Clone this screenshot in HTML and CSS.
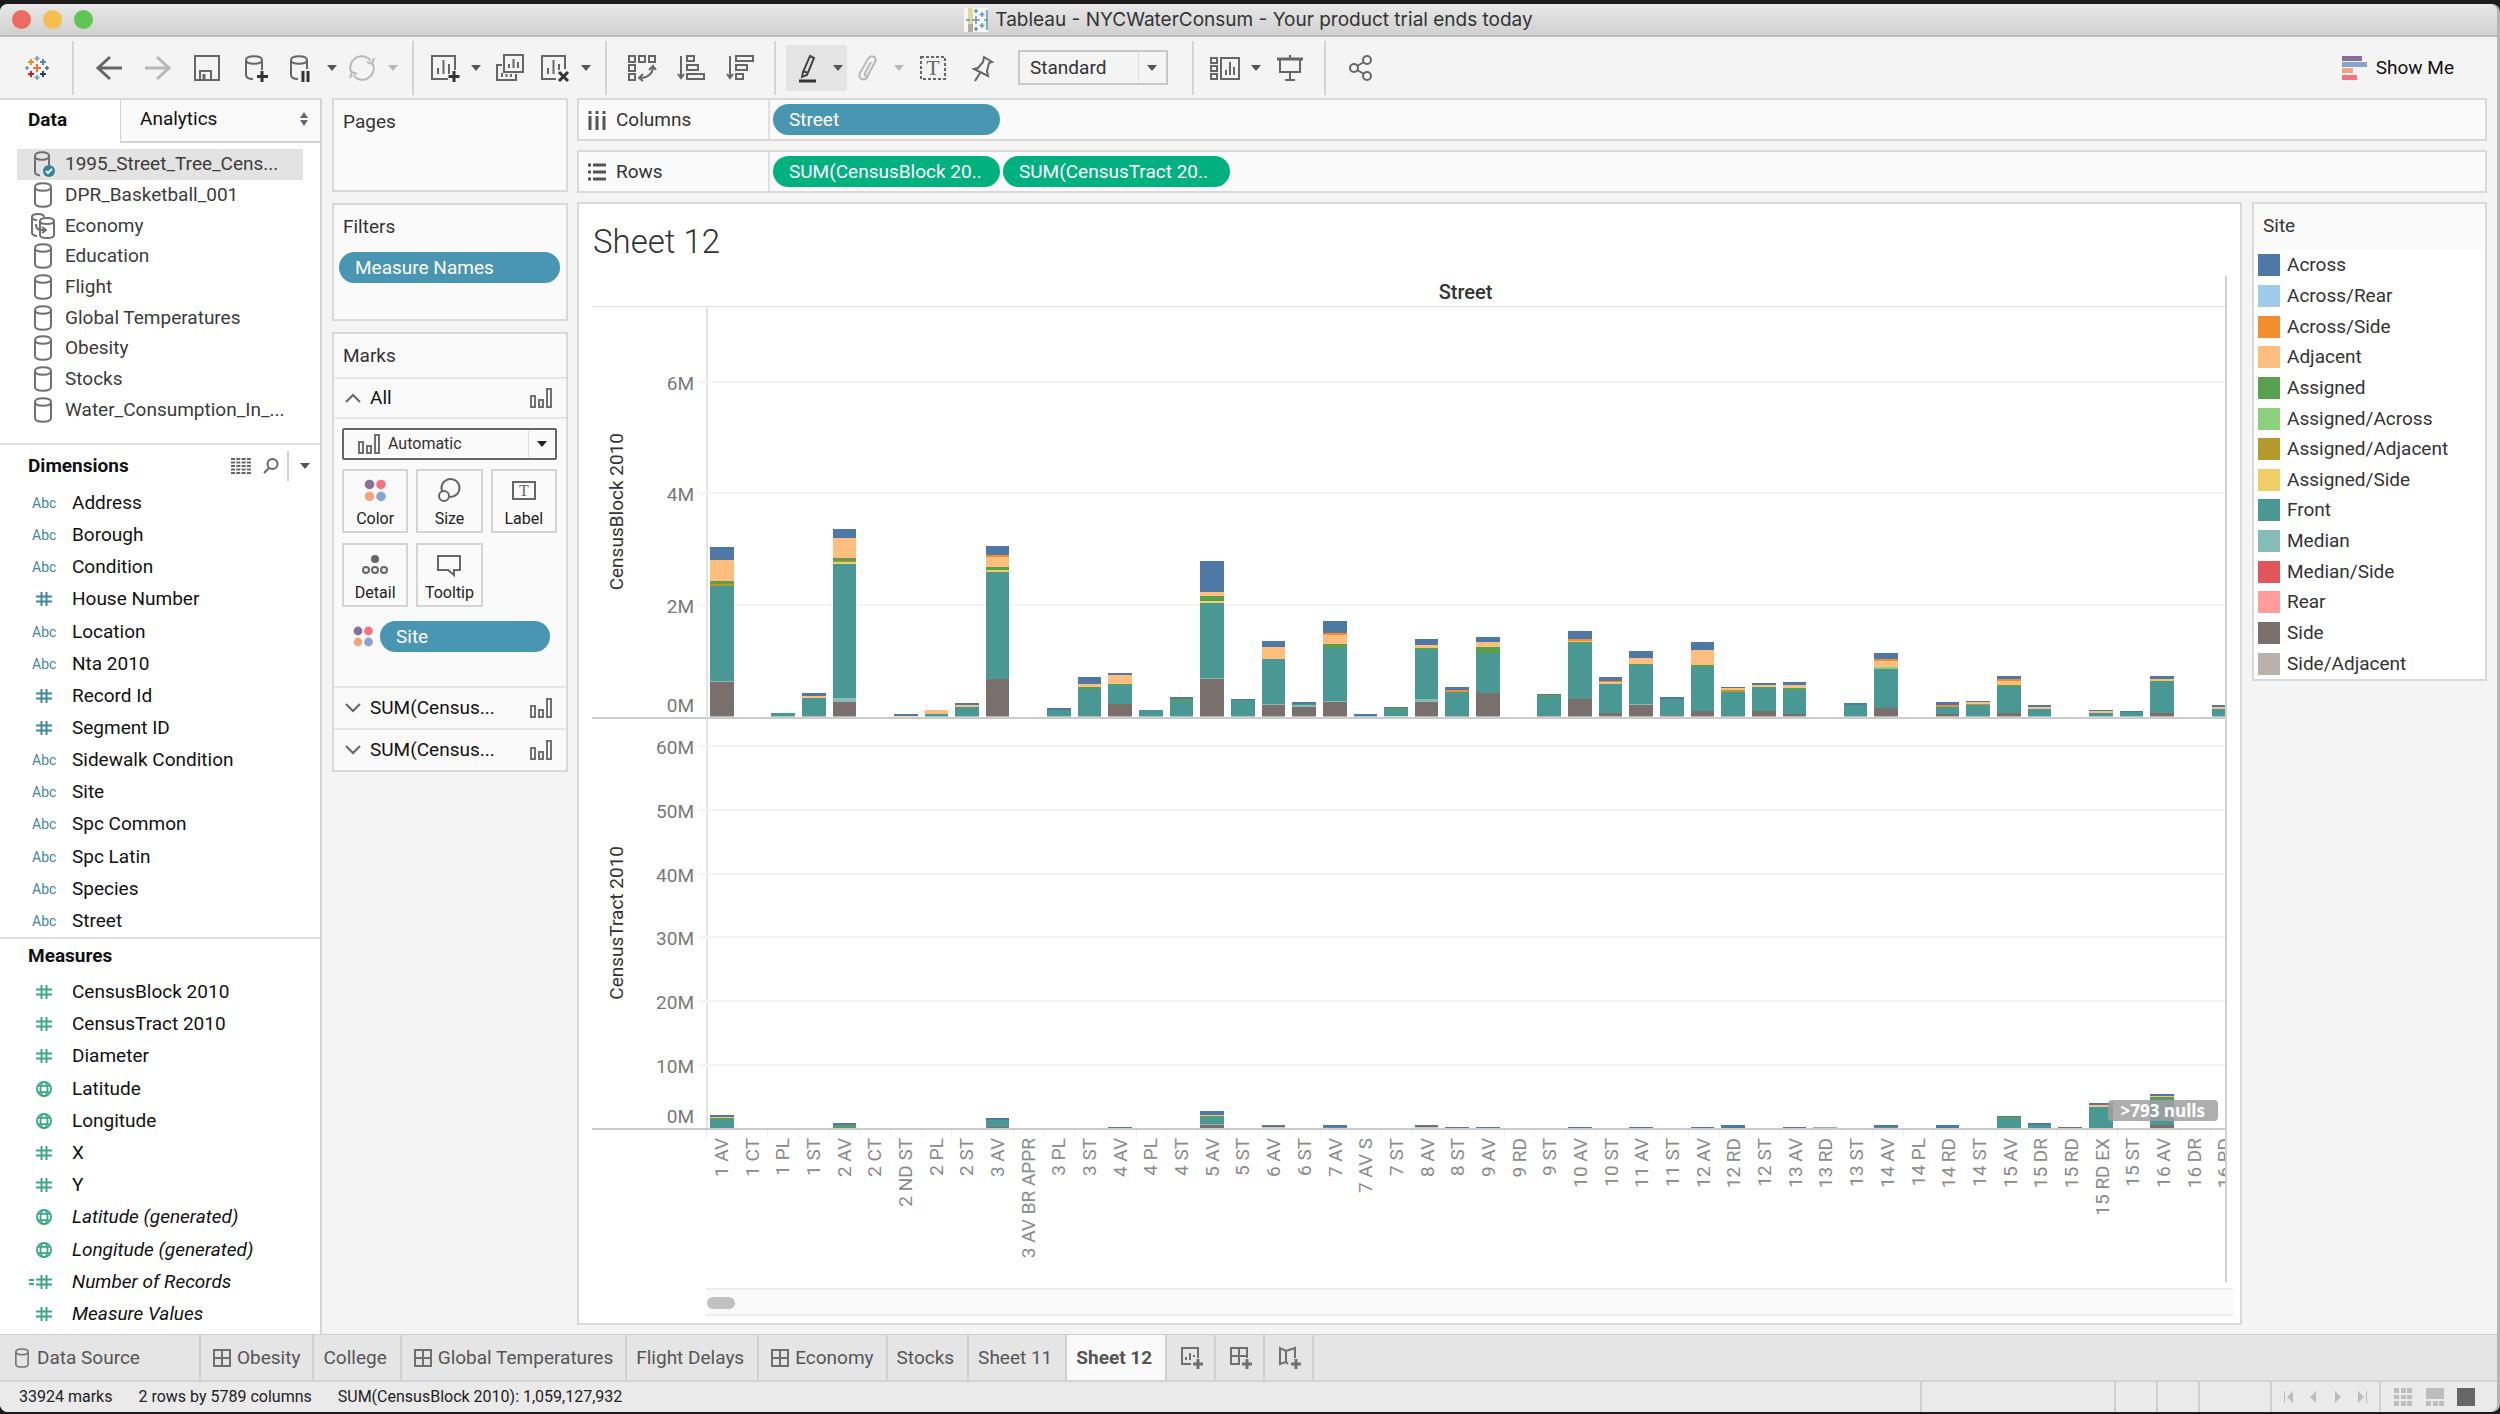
FILE: index.html
```html
<!DOCTYPE html>
<html lang="en">
<head>
    <meta charset="UTF-8">
    <meta name="viewport" content="width=device-width, initial-scale=1.0">
    <title>Tableau - NYCWaterConsum</title>
    <link rel="stylesheet" href="styles.css">
</head>
<body>
    <!-- Shared icons -->
    <svg class="sprite" aria-hidden="true">
        <symbol id="i-db" viewBox="0 0 18 26">
            <path d="M1 5v16c0 5 16 5 16 0V5M1 5c0-5 16-5 16 0s-16 5-16 0z"/>
        </symbol>
        <symbol id="i-hash" viewBox="0 0 16 16">
            <path d="M5.500 1v14M10.500 1v14M0 5.500h16M0 10.500h16"/>
        </symbol>
        <symbol id="i-globe" viewBox="0 0 18 18">
            <circle cx="9" cy="9" r="8"/><ellipse cx="9" cy="9" rx="4" ry="8"/><path d="M2 5.500h14M2 12.500h14"/>
        </symbol>
        <symbol id="i-bars" viewBox="0 0 22 22">
            <path d="M1 9h4v11H1zM9 13h4v7H9zM17 2h4v18h-4z"/>
        </symbol>
        <symbol id="i-dots" viewBox="0 0 20 22">
            <circle cx="5" cy="5" r="4.400" fill="#86709a"/><circle cx="15.500" cy="5" r="4.400" fill="#f9707e"/>
            <circle cx="5" cy="16" r="4.400" fill="#f3a67b"/><circle cx="15.500" cy="16" r="4.400" fill="#83a5cf"/>
        </symbol>
        <symbol id="i-dash" viewBox="0 0 18 18">
            <path d="M1 1h16v16H1zM9 1v16M1 9h16"/>
        </symbol>
        <symbol id="i-caret" viewBox="0 0 10 6">
            <path d="M0 0h10L5 6z"/>
        </symbol>
    </svg>

    <div class="window">
        <header class="titlebar">
            <div class="lights">
                <button class="light red" aria-label="Close"></button>
                <button class="light yellow" aria-label="Minimize"></button>
                <button class="light green" aria-label="Zoom"></button>
            </div>
            <div class="window-title">
                <svg width="24" height="24" viewBox="0 0 24 24">
                    <path fill="#f7f7f7" d="M0 0h24v24H0z"/>
                    <path fill="#e8d79a" d="M4 0h5v16H4z"/><path fill="#b9ad94" d="M4 16h5v8H4z"/>
                    <path fill="none" stroke="#5d96bd" stroke-width="1.500" d="M12 8v8M8 12h8M12 1v4M10 3h4M12 19v4M10 21h4M18 4v5M15.500 6.500h5M18 15v5M15.500 17.500h5M2 12h4M20 12h4M23 2v20"/>
                </svg>
                <span>Tableau - NYCWaterConsum - Your product trial ends today</span>
            </div>
        </header>

        <!-- Toolbar -->
        <nav class="toolbar">
            <button class="logo" aria-label="Tableau">
                <svg width="26" height="26" viewBox="0 0 26 26">
                    <g fill="none" stroke-width="2">
                        <path stroke="#e8762c" d="M13 9v8M9 13h8"/>
                        <path stroke="#eb9129" d="M7 4v6M4 7h6"/>
                        <path stroke="#59879b" d="M19 4v6M16 7h6"/>
                        <path stroke="#c72035" d="M7 16v6M4 19h6"/>
                        <path stroke="#1f457e" d="M19 16v6M16 19h6"/>
                        <path stroke="#7199a6" stroke-width="1.500" d="M13 1v5M10.500 3.500h5M13 20v5M10.500 22.500h5M3 11v4M1 13h4"/>
                        <path stroke="#5b6591" stroke-width="1.500" d="M23 11v4M21 13h4"/>
                    </g>
                </svg>
            </button>
            <span class="sep"></span>
            <button class="tool" aria-label="Undo"><svg viewBox="0 0 28 28"><path stroke-width="3" d="M15 3L3 14l12 11M3 14h24"/></svg></button>
            <button class="tool dim" aria-label="Redo"><svg viewBox="0 0 28 28"><path stroke-width="3" d="M13 3l12 11-12 11M25 14H1"/></svg></button>
            <button class="tool" aria-label="Save"><svg viewBox="0 0 28 28"><path d="M2 2h24v24H2zM7 26v-9h11v9"/><path stroke-width="3" d="M11 20v5"/></svg></button>
            <button class="tool" aria-label="New data source"><svg viewBox="0 0 28 28"><path d="M4 6v15c0 3 3 4 7 4M20 6v10M4 6c0-5 16-5 16 0s-16 5-16 0z"/><path stroke="#333" stroke-width="3" d="M20 17v11M15 22.500h11"/></svg></button>
            <button class="tool-menu" aria-label="Pause updates"><svg viewBox="0 0 28 28"><path d="M4 6v15c0 3 3 4 7 4M20 6v9M4 6c0-5 16-5 16 0s-16 5-16 0z"/><path stroke="#333" stroke-width="3" d="M16 17v11M21 17v11"/></svg><svg class="caret"><use href="#i-caret"/></svg></button>
            <button class="tool-menu dim" aria-label="Refresh"><svg viewBox="0 0 28 28"><path d="M3 18A11.500 11.500 0 0 1 23 7M25 10a11.500 11.500 0 0 1-20 11M19 8l5 2 2-6M9 20l-5-2-2 6"/></svg><svg class="caret"><use href="#i-caret"/></svg></button>
            <span class="sep"></span>
            <button class="tool-menu" aria-label="New worksheet"><svg viewBox="0 0 28 28"><path d="M17 25H1V2h23v14M7 20v-6M12.500 20V6M18 20V10"/><path stroke="#333" stroke-width="3" d="M23 17v11M17.500 22.500h11"/></svg><svg class="caret"><use href="#i-caret"/></svg></button>
            <button class="tool" aria-label="Duplicate"><svg viewBox="0 0 28 28"><path d="M8 1h19v17H8zM13 14v-4M17.500 14V5M22 14V8M6 11H1v15h19v-6M6 23v-4M10.500 23v-3M15 23v-3"/></svg></button>
            <button class="tool-menu" aria-label="Clear sheet"><svg viewBox="0 0 28 28"><path d="M15 25H1V2h23v13M7 20v-6M12.500 20V6M18 16v-6"/><path stroke="#333" stroke-width="3" d="M18 18l9 9M27 18l-9 9"/></svg><svg class="caret"><use href="#i-caret"/></svg></button>
            <span class="sep"></span>
            <button class="tool" aria-label="Swap rows and columns"><svg viewBox="0 0 28 28"><path d="M1 2h6v6H1zM11 2h6v6h-6zM21 2h6v6h-6zM1 11h6v6H1zM1 20h6v6H1zM25 13c0 6-5 11-13 11M21 16l4-4 3 4M15 20l-4 4 4 3"/></svg></button>
            <button class="tool" aria-label="Sort ascending"><svg viewBox="0 0 28 28"><path d="M4 2v22M1 20l3 4 3-4M10 2h7v5h-7zM10 11h11v5H10zM10 20h17v5H10z"/></svg></button>
            <button class="tool" aria-label="Sort descending"><svg viewBox="0 0 28 28"><path d="M4 2v22M1 20l3 4 3-4M10 2h17v5H10zM10 11h11v5H10zM10 20h7v5h-7z"/></svg></button>
            <span class="sep"></span>
            <button class="tool-menu on" aria-label="Highlight"><svg viewBox="0 0 28 28"><path stroke="#444" d="M17 2l4 2-7 17-5 2 1-5zM10 17l5 2"/><path stroke="#333" stroke-width="3" d="M6 27h17"/></svg><svg class="caret"><use href="#i-caret"/></svg></button>
            <button class="tool-menu dim" aria-label="Group members"><svg viewBox="0 0 28 28"><path d="M17 8l-6 11c-1 3 2 4 3 2l7-13c3-5-4-8-7-3L6 19c-3 6 5 9 8 3"/></svg><svg class="caret"><use href="#i-caret"/></svg></button>
            <button class="tool" aria-label="Show mark labels"><svg viewBox="0 0 28 28"><path stroke-dasharray="3 2" d="M2 3h24v22H2z"/><text class="glyph" x="14" y="21">T</text></svg></button>
            <button class="tool" aria-label="Fix axes"><svg viewBox="0 0 28 28"><path d="M16 3l8 5-3 1-2 8 1 5L6 15l4-1 5-6zM12 19l-5 8"/></svg></button>
            <div class="select fit">
                <select aria-label="Fit"><option>Standard</option></select>
                <svg class="caret"><use href="#i-caret"/></svg>
            </div>
            <span class="sep"></span>
            <button class="tool-menu" aria-label="Show cards"><svg viewBox="0 0 28 28"><path d="M0 4h6v5H0zM0 12h6v5H0zM0 20h6v5H0zM10 4h18v21H10zM15 21v-5M19 21V8M23 21v-8"/></svg><svg class="caret"><use href="#i-caret"/></svg></button>
            <button class="tool" aria-label="Presentation mode"><svg viewBox="0 0 28 28"><path d="M4 5v13h20V5M14 18v8M9 26h10M14 1v3"/><path stroke-width="3" d="M1 5h26"/></svg></button>
            <span class="sep"></span>
            <button class="tool" aria-label="Share"><svg viewBox="0 0 28 28"><circle cx="7" cy="14" r="4"/><circle cx="20" cy="6" r="4"/><circle cx="20" cy="22" r="4"/><path d="M10 12l7-4M10 16l7 4"/></svg></button>
            <button class="show-me">
                <svg width="26" height="24" viewBox="0 0 26 24"><path fill="#86709a" d="M0 0h20v5H0z"/><path fill="#83a5cf" d="M0 6h25v5H0z"/><path fill="#f3a67b" d="M0 12h11v5H0z"/><path fill="#f9707e" d="M0 19h15v5H0z"/></svg>
                Show Me
            </button>
        </nav>

        <div class="workspace">
            <!-- Data pane -->
            <aside class="data-pane">
                <div class="pane-tabs">
                    <button class="active">Data</button>
                    <button>Analytics
                        <svg width="10" height="14" viewBox="0 0 10 14"><path fill="#667" d="M1 6l4-6 4 6zM1 8h8l-4 6z"/></svg>
                    </button>
                </div>
                <ul class="sources">
                    <li class="selected"><svg viewBox="0 0 26 26"><path d="M19 14V5M5 5v16c0 2 2 3 5 3.500M5 5c0-5 14-5 14 0S5 10 5 5z"/><circle cx="19" cy="20" r="6" fill="#3182a3" stroke="none"/><path stroke="#fff" d="M16 20l2 2 4-4"/></svg>1995_Street_Tree_Cens...</li>
                    <li><svg><use href="#i-db"/></svg>DPR_Basketball_001</li>
                    <li><svg viewBox="-1 0 26 26"><path d="M6 23c-3 0-5-2-5-3V4M1 4c0-4 12-4 12 0M1 4c0 2 2 3 5 3M9 8v14c0 4 14 4 14 0V8M9 8c0-4 14-4 14 0s-14 4-14 0zM5 11c0 6 3 6 9 6M11 14l4 3-4 3"/></svg>Economy</li>
                    <li><svg><use href="#i-db"/></svg>Education</li>
                    <li><svg><use href="#i-db"/></svg>Flight</li>
                    <li><svg><use href="#i-db"/></svg>Global Temperatures</li>
                    <li><svg><use href="#i-db"/></svg>Obesity</li>
                    <li><svg><use href="#i-db"/></svg>Stocks</li>
                    <li><svg><use href="#i-db"/></svg>Water_Consumption_In_...</li>
                </ul>
                <div class="field-head">
                    <h2>Dimensions</h2>
                    <button aria-label="View data"><svg width="20" height="16" viewBox="0 0 20 16"><path fill="none" stroke="#666" stroke-width="2" stroke-dasharray="4 1.300" d="M0 1h20M0 4.500h20M0 8h20M0 11.500h20M0 15h20"/></svg></button>
                    <button class="find" aria-label="Find field"><svg width="16" height="16" viewBox="0 0 16 16"><g fill="none" stroke="#666" stroke-width="2"><circle cx="9.500" cy="6" r="5"/><path d="M6 10l-5 5"/></g></svg></button>
                    <button class="menu" aria-label="Menu"><svg class="caret"><use href="#i-caret"/></svg></button>
                </div>
                <ul class="fields dims">
                    <li><i>Abc</i>Address</li>
                    <li><i>Abc</i>Borough</li>
                    <li><i>Abc</i>Condition</li>
                    <li><svg><use href="#i-hash"/></svg>House Number</li>
                    <li><i>Abc</i>Location</li>
                    <li><i>Abc</i>Nta 2010</li>
                    <li><svg><use href="#i-hash"/></svg>Record Id</li>
                    <li><svg><use href="#i-hash"/></svg>Segment ID</li>
                    <li><i>Abc</i>Sidewalk Condition</li>
                    <li><i>Abc</i>Site</li>
                    <li><i>Abc</i>Spc Common</li>
                    <li><i>Abc</i>Spc Latin</li>
                    <li><i>Abc</i>Species</li>
                    <li><i>Abc</i>Street</li>
                </ul>
                <div class="field-head">
                    <h2>Measures</h2>
                </div>
                <ul class="fields measures">
                    <li><svg><use href="#i-hash"/></svg>CensusBlock 2010</li>
                    <li><svg><use href="#i-hash"/></svg>CensusTract 2010</li>
                    <li><svg><use href="#i-hash"/></svg>Diameter</li>
                    <li><svg><use href="#i-globe"/></svg>Latitude</li>
                    <li><svg><use href="#i-globe"/></svg>Longitude</li>
                    <li><svg><use href="#i-hash"/></svg>X</li>
                    <li><svg><use href="#i-hash"/></svg>Y</li>
                    <li class="calc"><svg><use href="#i-globe"/></svg>Latitude (generated)</li>
                    <li class="calc"><svg><use href="#i-globe"/></svg>Longitude (generated)</li>
                    <li class="calc"><svg viewBox="0 0 16 16"><path d="M5.500 1v14M10.500 1v14M0 5.500h16M0 10.500h16M-7 6h5M-7 10h5"/></svg>Number of Records</li>
                    <li class="calc"><svg><use href="#i-hash"/></svg>Measure Values</li>
                </ul>
            </aside>

            <!-- Cards -->
            <section class="cards">
                <div class="card pages"><h3>Pages</h3></div>
                <div class="card filters">
                    <h3>Filters</h3>
                    <button class="pill blue">Measure Names</button>
                </div>
                <div class="card marks">
                    <h3>Marks</h3>
                    <button class="mark-row"><svg class="chev" viewBox="0 0 16 10"><path d="M1 9l7-7 7 7"/></svg><span>All</span><svg class="bars"><use href="#i-bars"/></svg></button>
                    <div class="mark-body">
                        <div class="select mark-type">
                            <svg class="bars"><use href="#i-bars"/></svg>
                            <select aria-label="Mark type"><option>Automatic</option></select>
                            <svg class="caret"><use href="#i-caret"/></svg>
                        </div>
                        <div class="mark-grid">
                            <button><svg width="22" height="24"><use href="#i-dots"/></svg>Color</button>
                            <button><svg width="24" height="24" viewBox="0 0 24 24"><g fill="none" stroke="#666" stroke-width="2"><path d="M5 12a9 9 0 1 1 8 6"/><circle cx="7" cy="17" r="5"/></g></svg>Size</button>
                            <button><svg width="24" height="24" viewBox="0 0 24 24"><path fill="none" stroke="#666" stroke-width="2" d="M1 3h22v17H1z"/><text class="glyph small" x="12" y="17">T</text></svg>Label</button>
                            <button><svg width="26" height="24" viewBox="0 0 26 24"><circle cx="13" cy="6" r="4" fill="#666"/><g fill="none" stroke="#666" stroke-width="2"><circle cx="4" cy="17" r="3"/><circle cx="13" cy="17" r="3"/><circle cx="22" cy="17" r="3"/></g></svg>Detail</button>
                            <button><svg width="24" height="24" viewBox="0 0 24 24"><path fill="none" stroke="#666" stroke-width="2" d="M1 3h22v14h-6v5l-6-5H1z"/></svg>Tooltip</button>
                        </div>
                        <div class="mark-pill">
                            <svg width="22" height="22"><use href="#i-dots"/></svg>
                            <button class="pill blue">Site</button>
                        </div>
                    </div>
                    <button class="mark-row"><svg class="chev" viewBox="0 0 16 10"><path d="M1 1l7 7 7-7"/></svg><span>SUM(Census...</span><svg class="bars"><use href="#i-bars"/></svg></button>
                    <button class="mark-row"><svg class="chev" viewBox="0 0 16 10"><path d="M1 1l7 7 7-7"/></svg><span>SUM(Census...</span><svg class="bars"><use href="#i-bars"/></svg></button>
                </div>
            </section>

            <main class="main">
                <div class="shelf">
                    <div class="shelf-name"><svg width="18" height="20" viewBox="0 0 18 20"><path fill="none" stroke="#555" stroke-width="3" d="M2 6v14M9 6v14M16 6v14M2 1v3M9 1v3M16 1v3"/></svg>Columns</div>
                    <button class="pill blue">Street</button>
                </div>
                <div class="shelf">
                    <div class="shelf-name"><svg width="18" height="20" viewBox="0 0 18 20"><path fill="none" stroke="#555" stroke-width="3" d="M5 3h13M5 10h13M5 17h13M0 3h3M0 10h3M0 17h3"/></svg>Rows</div>
                    <button class="pill green">SUM(CensusBlock 20..</button>
                    <button class="pill green">SUM(CensusTract 20..</button>
                </div>
                <div class="stage">
                    <section class="view">
                        <h1>Sheet 12</h1>
                        <div class="chart">
                            <div class="chart-head">Street</div>
                            <div class="pane" id="block">
                                <div class="axis"><span class="axis-title">CensusBlock 2010</span></div>
                                <div class="plot"><div class="cols"></div></div>
                            </div>
                            <div class="pane" id="tract">
                                <div class="axis"><span class="axis-title">CensusTract 2010</span></div>
                                <div class="plot"><div class="cols"></div></div>
                                <button class="nulls">&gt;793 nulls</button>
                            </div>
                            <div class="labels"><div class="cols" id="labels"></div></div>
                        </div>
                        <div class="scroll"><div class="thumb"></div></div>
                    </section>
                    <aside class="legend">
                        <h3>Site</h3>
                        <ul>
                            <li><i class="ac"></i>Across</li>
                            <li><i class="ar"></i>Across/Rear</li>
                            <li><i class="as"></i>Across/Side</li>
                            <li><i class="ad"></i>Adjacent</li>
                            <li><i class="gn"></i>Assigned</li>
                            <li><i class="ga"></i>Assigned/Across</li>
                            <li><i class="gj"></i>Assigned/Adjacent</li>
                            <li><i class="gs"></i>Assigned/Side</li>
                            <li><i class="fr"></i>Front</li>
                            <li><i class="me"></i>Median</li>
                            <li><i class="ms"></i>Median/Side</li>
                            <li><i class="re"></i>Rear</li>
                            <li><i class="si"></i>Side</li>
                            <li><i class="sj"></i>Side/Adjacent</li>
                        </ul>
                    </aside>
                </div>
            </main>
        </div>

        <!-- Sheet tabs -->
        <nav class="sheets">
            <a href="#" class="source"><svg width="14" height="20"><use href="#i-db"/></svg>Data Source</a>
            <a href="#" class="dash"><svg width="18" height="18"><use href="#i-dash"/></svg>Obesity</a>
            <a href="#">College</a>
            <a href="#" class="dash"><svg width="18" height="18"><use href="#i-dash"/></svg>Global Temperatures</a>
            <a href="#">Flight Delays</a>
            <a href="#" class="dash"><svg width="18" height="18"><use href="#i-dash"/></svg>Economy</a>
            <a href="#">Stocks</a>
            <a href="#">Sheet 11</a>
            <a href="#" class="current">Sheet 12</a>
            <button aria-label="New worksheet"><svg width="24" height="24" viewBox="0 0 24 24"><path d="M11 18H2V2h16v10M6 14v-3M10 14V7M14 11V9"/><path stroke-width="3" d="M18 13v10M13 18h10"/></svg></button>
            <button aria-label="New dashboard"><svg width="24" height="24" viewBox="0 0 24 24"><path d="M11 18H2V2h16v10M10 2v16M2 10h16"/><path stroke-width="3" d="M18 13v10M13 18h10"/></svg></button>
            <button aria-label="New story"><svg width="24" height="24" viewBox="0 0 24 24"><path d="M10 18l-2-2-6 2V2l6 3 9-3v10M8 5v11"/><path stroke-width="3" d="M18 13v10M13 18h10"/></svg></button>
        </nav>

        <footer class="status">
            <span class="text">33924 marks</span>
            <span class="text">2 rows by 5789 columns</span>
            <span class="text">SUM(CensusBlock 2010): 1,059,127,932</span>
            <span class="box wide"></span>
            <span class="box"></span>
            <span class="box"></span>
            <span class="box mid"></span>
            <div class="box nav">
                <button aria-label="First"><svg viewBox="0 0 12 12"><path d="M1 0h1v12H1zM10 0v12L4 6z"/></svg></button>
                <button aria-label="Previous"><svg viewBox="0 0 12 12"><path d="M9 0v12L3 6z"/></svg></button>
                <button aria-label="Next"><svg viewBox="0 0 12 12"><path d="M3 0v12l6-6z"/></svg></button>
                <button aria-label="Last"><svg viewBox="0 0 12 12"><path d="M2 0v12l6-6zM10 0h1v12h-1z"/></svg></button>
            </div>
            <div class="box modes">
                <button aria-label="Sheet sorter"><svg viewBox="0 0 18 18"><path d="M0 0h5v5H0zM7 0h5v5H7zM13 0h5v5h-5zM0 7h5v4H0zM7 7h5v4H7zM13 7h5v4h-5zM0 13h5v5H0zM7 13h5v5H7zM13 13h5v5h-5z"/></svg></button>
                <button aria-label="Filmstrip"><svg viewBox="0 0 18 18"><path d="M0 0h18v11H0zM0 13h5v5H0zM7 13h5v5H7zM13 13h5v5h-5z"/></svg></button>
                <button class="on" aria-label="Tabs"><svg viewBox="0 0 18 18"><path d="M0 0h18v18H0z"/></svg></button>
            </div>
        </footer>
    </div>

    <script src="script.js"></script>
</body>
</html>
```
FILE: styles.css
```css
* {
    box-sizing: border-box;
}

body {
    margin: 0;
    padding: 4px 3px 2px 0;
    background: #1b1b1b;
    font-family: Roboto, "Liberation Sans", sans-serif;
    font-size: 19px;
    line-height: 24px;
    color: #333;
}

button, select {
    font: inherit;
    color: inherit;
    background: none;
    border: none;
    padding: 0;
    margin: 0;
}

ul {
    list-style: none;
    margin: 0;
    padding: 0;
}

h1, h2, h3 {
    margin: 0;
    font-size: 19px;
    font-weight: 400;
}

svg {
    flex: none;
    overflow: visible;
}

.sprite {
    position: absolute;
    width: 0;
    height: 0;
}

.caret {
    width: 10px;
    height: 6px;
    fill: #555;
}

.window {
    display: flex;
    flex-direction: column;
    min-height: calc(100vh - 6px);
    background: #f4f4f4;
    border-radius: 8px;
    box-shadow: 3px 0 0 #b4b4b4;
    overflow: hidden;
}

/* Title bar */
.titlebar {
    display: grid;
    grid-template-columns: 1fr auto 1fr;
    align-items: center;
    height: 33px;
    background: linear-gradient(#e8e8e8, #d0d0d0);
    border-bottom: 2px solid #bdbdbd;
}

.lights {
    display: flex;
    gap: 12px;
    padding-left: 12px;
}

.light {
    width: 19px;
    height: 19px;
    border-radius: 50%;
}

.red { background: #ee6a5f; }
.yellow { background: #f5be4f; }
.green.light { background: #61c554; }

.window-title {
    display: flex;
    align-items: center;
    gap: 7px;
    font-family: Inter, sans-serif;
    font-size: 19px;
}

/* Toolbar */
.toolbar {
    display: flex;
    align-items: center;
    height: 61px;
}

.logo {
    width: 62px;
    padding-left: 12px;
    display: flex;
    justify-content: center;
}

.sep {
    width: 2px;
    height: 54px;
    margin: 0 10px;
    background: #d4d4d4;
}

.tool, .tool-menu {
    display: flex;
    align-items: center;
    height: 46px;
}

.tool {
    width: 49px;
    justify-content: center;
}

.tool-menu {
    width: 61px;
    gap: 12px;
    padding-left: 7px;
}

.tool svg, .tool-menu svg:first-child {
    width: 28px;
    height: 28px;
    fill: none;
    stroke: #666;
    stroke-width: 2;
}

.tool.dim svg, .tool-menu.dim svg:first-child {
    stroke: #b8b8b8;
}

.dim .caret {
    fill: #b8b8b8;
}

.on.tool-menu {
    background: #e4e4e4;
}

.glyph {
    font: 22px "Liberation Serif", serif;
    fill: #666;
    stroke: none;
    text-anchor: middle;
}

.glyph.small {
    font-size: 16px;
}

.select {
    display: flex;
    align-items: center;
    position: relative;
    border: 2px solid #c8c8c8;
}

.select select {
    appearance: none;
    flex: 1;
    align-self: stretch;
    padding-left: 10px;
}

.select .caret {
    position: absolute;
    right: 9px;
    pointer-events: none;
}

.fit {
    width: 150px;
    height: 35px;
    margin: 0 14px 0 12px;
}

.fit::after {
    content: "";
    width: 1px;
    height: 31px;
    margin-right: 27px;
    background: #ddd;
}

.show-me {
    display: flex;
    align-items: center;
    gap: 8px;
    margin-left: auto;
    margin-right: 43px;
    color: #111;
}

/* Workspace */
.workspace {
    display: flex;
    flex: 1;
}

.data-pane {
    width: 322px;
    background: #fff;
    border-top: 2px solid #d9d9d9;
    border-right: 2px solid #d4d4d4;
    color: #111;
}

.pane-tabs {
    display: flex;
    height: 43px;
}

.pane-tabs button {
    display: flex;
    align-items: center;
    justify-content: space-between;
    flex: 1;
    padding: 0 11px 4px 19px;
    background: #fafafa;
    border-left: 1px solid #d4d4d4;
    border-bottom: 2px solid #d4d4d4;
}

.pane-tabs .active {
    flex: none;
    width: 120px;
    padding-left: 28px;
    background: #fff;
    border: none;
    font-weight: 700;
}

.sources {
    display: grid;
    grid-auto-rows: 1fr;
    height: 276px;
    margin: 6px 17px 0 17px;
    color: #3b3b3b;
}

.sources li {
    display: flex;
    align-items: center;
    gap: 9px;
    padding-left: 13px;
}

.sources svg {
    width: 26px;
    height: 26px;
    fill: none;
    stroke: #707070;
    stroke-width: 2;
}

.sources .selected {
    background: #e3e3e3;
}

.field-head {
    display: flex;
    align-items: center;
    height: 36px;
    padding: 0 10px 0 28px;
    border-top: 2px solid #e0e0e0;
}

.sources + .field-head {
    margin-top: 18px;
    height: 44px;
}

.field-head h2 {
    flex: 1;
    font-weight: 700;
}

.field-head button {
    display: flex;
    margin-right: 12px;
}

.field-head .find {
    margin-right: 8px;
}

.field-head .menu {
    height: 30px;
    align-items: center;
    margin-right: 0;
    padding: 0 0 0 11px;
    border-left: 2px solid #d4d4d4;
}

.fields {
    display: grid;
    grid-auto-rows: 1fr;
}

.dims {
    height: 450px;
}

.measures {
    height: 354px;
    margin-top: 3px;
}

.fields li {
    display: flex;
    align-items: center;
    gap: 16px;
    padding-left: 32px;
}

.fields i {
    width: 24px;
    font-size: 14px;
    font-style: normal;
    color: #3f87a4;
}

.fields svg {
    width: 16px;
    height: 16px;
    margin: 0 4px;
    fill: none;
    stroke: #3f87a4;
    stroke-width: 2;
}

.measures svg {
    stroke: #3aaa80;
}

.calc {
    font-style: italic;
}

/* Cards */
.cards {
    display: flex;
    flex-direction: column;
    gap: 11px;
    width: 236px;
    margin: 0 9px 0 10px;
}

.card, .shelf, .view, .legend {
    background: #fafafa;
    border: 2px solid #d9d9d9;
}

.card h3 {
    height: 43px;
    padding: 10px 9px;
}

.pages {
    height: 94px;
}

.filters {
    height: 118px;
}

.pill {
    display: block;
    height: 31px;
    padding: 0 16px;
    border-radius: 16px;
    color: #fff;
    text-align: left;
}

.pill.blue { background: #4996b2; }
.pill.green { background: #00b180; }

.filters .pill {
    width: 221px;
    margin: 4px 5px;
}

.mark-row {
    display: flex;
    align-items: center;
    width: 100%;
    height: 42px;
    padding: 0 14px 0 11px;
    border-top: 2px solid #e6e6e6;
    color: #111;
}

.mark-row:first-of-type {
    height: 40px;
}

.mark-row span {
    flex: 1;
    padding-left: 9px;
    text-align: left;
}

.chev {
    width: 16px;
    height: 10px;
    fill: none;
    stroke: #666;
    stroke-width: 2;
}

.bars {
    width: 22px;
    height: 22px;
    fill: none;
    stroke: #707070;
    stroke-width: 2;
}

.mark-body {
    height: 269px;
    padding: 9px 9px 0 8px;
    border-top: 2px solid #e6e6e6;
}

.mark-type {
    height: 32px;
    padding-left: 14px;
    border: 2px solid #666;
    border-radius: 2px;
    font-size: 16px;
}

.mark-type select {
    padding-left: 8px;
}

.mark-type::after {
    content: "";
    width: 1px;
    height: 28px;
    margin-right: 26px;
    background: #ddd;
}

.mark-type .caret {
    right: 8px;
    fill: #222;
}

.mark-grid {
    display: grid;
    grid-template-columns: repeat(3, 1fr);
    gap: 10px 8px;
    margin-top: 9px;
}

.mark-grid button {
    display: flex;
    flex-direction: column;
    align-items: center;
    justify-content: space-between;
    height: 64px;
    padding: 8px 0 0;
    border: 2px solid #d4d4d4;
    font-size: 16px;
    color: #222;
}

.mark-pill {
    display: flex;
    align-items: center;
    gap: 6px;
    padding: 14px 7px 0 10px;
}

.mark-pill .pill {
    flex: 1;
}

/* Shelves */
.main {
    display: flex;
    flex-direction: column;
    flex: 1;
    min-width: 0;
    gap: 9px;
    padding: 0 10px 9px 0;
}

.shelf {
    display: flex;
    align-items: center;
    gap: 3px;
    height: 43px;
}

.shelf-name {
    display: flex;
    align-items: center;
    align-self: stretch;
    gap: 10px;
    width: 191px;
    padding-left: 9px;
    border-right: 2px solid #e0e0e0;
}

.shelf .pill {
    width: 227px;
}

.stage {
    display: flex;
    align-items: flex-start;
    flex: 1;
    gap: 10px;
}

/* Sheet view */
.view {
    display: flex;
    flex-direction: column;
    align-self: stretch;
    flex: 1;
    min-width: 0;
    background: #fff;
    padding: 0 13px 7px;
}

h1 {
    height: 72px;
    padding: 20px 1px 0;
    font-size: 33px;
    line-height: 36px;
    font-weight: 300;
}

.chart {
    display: flex;
    flex-direction: column;
    flex: 1;
    border-right: 2px solid #d0d0d0;
}

.chart-head {
    height: 31px;
    line-height: 32px;
    padding-left: 114px;
    text-align: center;
    font-size: 20px;
    font-weight: 500;
    border-bottom: 1px solid #e0e0e0;
}

.pane {
    display: flex;
    flex: 1;
    position: relative;
    border-bottom: 2px solid #cccccc;
}

.axis {
    display: flex;
    align-items: center;
    width: 114px;
    padding-left: 13px;
}

.axis-title {
    writing-mode: vertical-rl;
    transform: rotate(180deg);
}

.plot {
    position: relative;
    flex: 1;
    min-width: 0;
    border-left: 2px solid #e4e4e4;
}

.cols {
    display: grid;
    grid-template-columns: repeat(50, 1fr);
    width: 101%;
    height: 100%;
}

.plot .cols {
    position: relative;
}

.plot, .labels {
    clip-path: inset(0 0 0 -80px);
}

.bar {
    display: flex;
    flex-direction: column;
    justify-content: flex-end;
    padding: 0 5px 0 2px;
}

.tick {
    position: absolute;
    left: -10px;
    right: 0;
    height: 2px;
    background: #f3f3f3;
}

.tick span {
    position: absolute;
    right: 100%;
    top: -9px;
    padding-right: 4px;
    color: #787878;
}

.tick.zero {
    background: none;
}

.labels {
    height: 152px;
    margin-left: 114px;
    overflow: hidden;
}

.label {
    border-left: 1px solid #eee;
    height: 7px;
    display: flex;
    align-items: flex-start;
    justify-content: center;
    padding-top: 8px;
    color: #8a8a8a;
}

.label span {
    writing-mode: vertical-rl;
    transform: rotate(180deg);
    white-space: nowrap;
}

.nulls {
    position: absolute;
    right: 7px;
    bottom: 7px;
    height: 21px;
    padding: 0 13px;
    border-radius: 4px;
    background: rgba(160, 160, 160, 0.85);
    color: #fff;
    font: 700 17px/21px "Open Sans", sans-serif;
}

.scroll {
    height: 28px;
    margin: 6px -6px 0 114px;
    padding: 7px 1px;
    background: #fafafa;
    border: solid #ececec;
    border-width: 2px 0;
}

.thumb {
    width: 28px;
    height: 12px;
    border-radius: 6px;
    background: #c1c1c1;
}

/* Legend */
.legend {
    width: 235px;
    background: #fff;
}

.legend h3 {
    height: 46px;
    padding: 10px 9px;
    background: #fafafa;
}

.legend ul {
    display: grid;
    grid-auto-rows: 1fr;
    height: 429px;
}

.legend li {
    display: flex;
    align-items: center;
    gap: 7px;
    padding-left: 4px;
}

.legend i {
    width: 22px;
    height: 22px;
}

.ac { background: #4e79a7; }
.ar { background: #a0cbe8; }
.as { background: #f28e2b; }
.ad { background: #ffbe7d; }
.gn { background: #59a14f; }
.ga { background: #8cd17d; }
.gj { background: #b6992d; }
.gs { background: #f1ce63; }
.fr { background: #499894; }
.me { background: #86bcb6; }
.ms { background: #e15759; }
.re { background: #ff9d9a; }
.si { background: #79706e; }
.sj { background: #bab0ac; }

/* Sheet tabs */
.sheets {
    display: flex;
    height: 48px;
    background: #e5e5e5;
    border-top: 1px solid #d0d0d0;
    border-bottom: 2px solid #d4d4d4;
}

.sheets a, .sheets button {
    display: flex;
    align-items: center;
    gap: 6px;
    padding: 0 13px 0 9px;
    border-right: 2px solid #d0d0d0;
    color: #555;
    text-decoration: none;
}

.sheets .source {
    width: 201px;
    gap: 8px;
    padding-left: 15px;
}

.sheets .dash {
    padding: 0 12px;
}

.sheets .current {
    background: #fafafa;
    font-weight: 700;
}

.sheets button {
    width: 49px;
    padding: 0 11px 0 13px;
}

.sheets svg {
    fill: none;
    stroke: #707070;
    stroke-width: 2;
}

/* Status bar */
.status {
    display: flex;
    height: 30px;
    line-height: 30px;
    padding-left: 19px;
    background: #eaeaea;
    font-size: 16px;
    color: #222;
}

.status .text {
    margin-right: 26px;
}

.box {
    width: 42px;
    border-left: 2px solid #d0d0d0;
}

.box.wide {
    width: 194px;
    margin-left: auto;
}

.box.mid {
    width: 72px;
}

.nav, .modes {
    display: flex;
    align-items: center;
    justify-content: space-between;
}

.box.nav {
    width: 109px;
    padding: 0 11px;
}

.box.modes {
    width: 118px;
    padding: 0 22px 0 13px;
}

.nav svg, .modes svg {
    display: block;
    width: 12px;
    height: 12px;
    fill: #bdbdbd;
}

.modes svg {
    width: 18px;
    height: 18px;
}

.modes .on svg {
    fill: #666;
}
```
FILE: script.js
```js
// Each street: [name, CensusBlock stack, CensusTract stack]
// A stack lists "site code + running top", from the axis upwards
var streets = [
    ['1 AV', 'si35 me36 fr131 gj133 gn136 ad157 ac170', 'fr8 gn10 ad11 ac13'],
    ['1 CT', '', ''],
    ['1 PL', 'fr4', ''],
    ['1 ST', 'si1 fr19 ad21 ac24', ''],
    ['2 AV', 'si15 me19 fr153 gs155 gj156 gn159 ad179 ac188', 'fr1 gn3 ac5'],
    ['2 CT', '', ''],
    ['2 ND ST', 'ad1 ac3', ''],
    ['2 PL', 'fr3 ad7', ''],
    ['2 ST', 'fr10 ad12 ac14', ''],
    ['3 AV', 'si38 fr145 gs147 gn150 ad160 as162 ac171', 'si1 fr8 ac10'],
    ['3 AV BR APPR', '', ''],
    ['3 PL', 'fr7 ac9', ''],
    ['3 ST', 'si1 fr28 gn30 ad33 ac40', ''],
    ['4 AV', 'si13 fr32 gn33 ad42 ac44', 'ac1'],
    ['4 PL', 'fr7', ''],
    ['4 ST', 'fr16 gn18 ac20', ''],
    ['5 AV', 'si38 me39 fr114 gs116 gn121 ad125 ac156', 'si3 me4 fr11 gn12 ad13 ac17'],
    ['5 ST', 'fr17 ac18', ''],
    ['6 AV', 'si12 me13 fr58 ad70 ac76', 'ad1 ac3'],
    ['6 ST', 'si10 me12 fr13 ac15', ''],
    ['7 AV', 'si15 me16 fr69 gn73 ad82 as84 ac96', 'fr1 ac3'],
    ['7 AV S', 'fr1 ac3', ''],
    ['7 ST', 'me1 fr8 gn9 ac10', ''],
    ['8 AV', 'si15 me18 fr67 gn69 ad72 ac78', 'ad1 ac3'],
    ['8 ST', 'si1 fr25 as27 ac30', 'ac1'],
    ['9 AV', 'si24 fr64 gn70 ad75 ac80', 'ac1'],
    ['9 RD', '', ''],
    ['9 ST', 'si1 fr20 gn22 ac23', ''],
    ['10 AV', 'si18 fr74 gn75 ad76 as78 ac86', 'ac1'],
    ['10 ST', 'si4 fr33 ad35 as36 ac40', ''],
    ['11 AV', 'si12 me13 fr52 gn53 ad59 ac66', 'ac1'],
    ['11 ST', 'ms1 fr18 ac20', ''],
    ['12 AV', 'si6 fr50 gn52 ad67 ac75', 'ac1'],
    ['12 RD', 'si1 fr25 gj27 ad29 ac30', 'ac3'],
    ['12 ST', 'si6 fr29 gn30 ad32 ac34', ''],
    ['13 AV', 'si3 fr27 gn29 ad32 ac35', 'ac1'],
    ['13 RD', '', 'me1'],
    ['13 ST', 'fr12 ac14', ''],
    ['14 AV', 'si9 fr48 ga50 ad56 as58 ac64', 'fr1 ac3'],
    ['14 PL', '', ''],
    ['14 RD', 'si3 fr10 as12 ac15', 'ac3'],
    ['14 ST', 'si1 fr12 gj13 ad15 ac16', ''],
    ['15 AV', 'si4 fr30 gn32 ad36 as38 ac41', 'fr9 gn11 ac12'],
    ['15 DR', 'fr8 ad10 ac12', 'fr3 ac5'],
    ['15 RD', '', 'si1'],
    ['15 RD EX', 'fr4 ad6 ac7', 'fr21 ad23 ac25'],
    ['15 ST', 'fr5 ac6', ''],
    ['16 AV', 'si4 fr35 gn36 ad38 ac41', 'si3 fr29 gn31 ad32 ac34'],
    ['16 DR', '', ''],
    ['16 RD', 'fr8 ad10 ac12', '']
];

// Axis height in chart units, and where the ticks stand on it
var panes = [
    { id: 'block', max: 410, ticks: { '0M': 12, '2M': 111, '4M': 223, '6M': 334 } },
    { id: 'tract', max: 410, ticks: { '0M': 12, '10M': 62, '20M': 126, '30M': 190, '40M': 253, '50M': 317, '60M': 381 } }
];

panes.forEach(function(pane, p) {
    var plot = document.querySelector('#' + pane.id + ' .plot');
    var cols = plot.querySelector('.cols');

    Object.keys(pane.ticks).forEach(function(name) {
        var tick = document.createElement('div');
        tick.className = name === '0M' ? 'tick zero' : 'tick';
        tick.style.bottom = pane.ticks[name] / pane.max * 100 + '%';
        tick.innerHTML = '<span>' + name + '</span>';
        plot.insertBefore(tick, cols);
    });

    streets.forEach(function(street) {
        var bar = document.createElement('div');
        bar.className = 'bar';
        var last = 0;
        street[p + 1].split(' ').filter(Boolean).forEach(function(part) {
            var top = Number(part.slice(2));
            var seg = document.createElement('div');
            seg.className = part.slice(0, 2);
            seg.style.height = (top - last) / pane.max * 100 + '%';
            bar.prepend(seg);
            last = top;
        });
        cols.appendChild(bar);
    });
});

// Street names under the bars
streets.forEach(function(street) {
    var label = document.createElement('div');
    label.className = 'label';
    label.innerHTML = '<span>' + street[0] + '</span>';
    document.getElementById('labels').appendChild(label);
});
```
